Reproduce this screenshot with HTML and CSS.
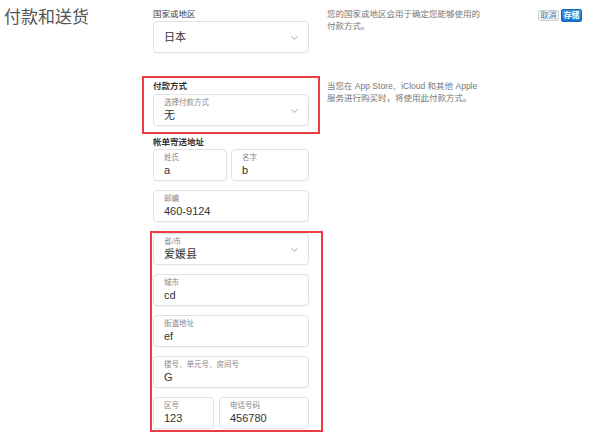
FILE: index.html
```html
<!DOCTYPE html>
<html lang="zh-CN">
<head>
    <meta charset="UTF-8">
    <meta name="viewport" content="width=device-width, initial-scale=1.0">
    <title>付款和送货</title>
    <link rel="stylesheet" href="styles.css">
</head>
<body>
<div class="page">
    <h1 class="title">付款和送货</h1>

    <div class="main">
        <section class="section">
            <div class="col">
                <div class="group-label">国家或地区</div>
                <div class="field select">
                    <span class="value">日本</span>
                    <svg class="chev" width="7" height="4" viewBox="0 0 7 4"><path d="M0.5 0.5 L3.5 3.3 L6.5 0.5" fill="none" stroke="#9a9a9a" stroke-width="0.9"/></svg>
                </div>
            </div>
            <p class="desc">您的国家或地区会用于确定您能够使用的<br>付款方式。</p>
        </section>

        <section class="section">
            <div class="col">
                <div class="mark mark-pay">
                    <div class="group-label strong">付款方式</div>
                    <div class="field select">
                        <div class="stack">
                            <span class="small">选择付款方式</span>
                            <span class="value">无</span>
                        </div>
                        <svg class="chev" width="7" height="4" viewBox="0 0 7 4"><path d="M0.5 0.5 L3.5 3.3 L6.5 0.5" fill="none" stroke="#9a9a9a" stroke-width="0.9"/></svg>
                    </div>
                </div>
            </div>
            <p class="desc desc-pay">当您在 App Store、iCloud 和其他 Apple<br>服务进行购买时，将使用此付款方式。</p>
        </section>

        <section class="section">
            <div class="col">
                <div class="group-label strong billing">帐单寄送地址</div>
                <div class="fields">
                    <div class="row row-name">
                        <div class="field"><div class="stack"><span class="small">姓氏</span><span class="value">a</span></div></div>
                        <div class="field"><div class="stack"><span class="small">名字</span><span class="value">b</span></div></div>
                    </div>
                    <div class="field"><div class="stack"><span class="small">邮编</span><span class="value">460-9124</span></div></div>
                </div>

                <div class="mark mark-addr">
                    <div class="fields">
                        <div class="field select">
                            <div class="stack"><span class="small">省/市</span><span class="value">爱媛县</span></div>
                            <svg class="chev" width="7" height="4" viewBox="0 0 7 4"><path d="M0.5 0.5 L3.5 3.3 L6.5 0.5" fill="none" stroke="#9a9a9a" stroke-width="0.9"/></svg>
                        </div>
                        <div class="field"><div class="stack"><span class="small">城市</span><span class="value">cd</span></div></div>
                        <div class="field"><div class="stack"><span class="small">街道地址</span><span class="value">ef</span></div></div>
                        <div class="field"><div class="stack"><span class="small">楼号、单元号、房间号</span><span class="value">G</span></div></div>
                        <div class="row row-phone">
                            <div class="field"><div class="stack"><span class="small">区号</span><span class="value">123</span></div></div>
                            <div class="field"><div class="stack"><span class="small">电话号码</span><span class="value">456780</span></div></div>
                        </div>
                    </div>
                </div>
            </div>
        </section>
    </div>

    <div class="actions">
        <button class="btn btn-cancel">取消</button>
        <button class="btn btn-save">存储</button>
    </div>
</div>
</body>
</html>
```

FILE: styles.css
```css
body { margin: 0; font-family: "Liberation Sans", "Noto Sans CJK SC", sans-serif; color: #333; background: #fff; }
.page { display: flex; align-items: flex-start; }
.title { width: 149px; margin: 0; padding: 8px 0 0 4px; font-size: 17px; line-height: 20px; font-weight: 400; color: #555; }

.main { flex: 1; padding-top: 8px; }
.section { display: grid; grid-template-columns: 156px 1fr; column-gap: 18px; align-items: start; }
.section + .section { margin-top: 23px; }
.section:last-child { margin-top: 2px; }

.group-label { font-size: 8.5px; line-height: 12px; color: #444; margin-bottom: 1px; }
.group-label.strong { color: #333; font-weight: 700; }
.mark-pay .group-label { margin-bottom: 2px; }

.desc { margin: 0; font-size: 8.5px; line-height: 12px; color: #777; white-space: nowrap; }
.desc-pay { margin-top: 4px; }

.field { height: 32px; box-sizing: border-box; border: 1px solid #e2e2e2; border-radius: 4px; padding: 3px 10px; display: flex; align-items: center; justify-content: space-between; background: #fff; box-shadow: 0 1px 1px rgba(0,0,0,0.03); }
.stack { display: flex; flex-direction: column; }
.small { font-size: 7.5px; line-height: 10px; color: #888; }
.value { font-size: 11px; line-height: 14px; color: #333; }
.chev { flex: none; margin-top: 1px; }

.fields { display: flex; flex-direction: column; gap: 9px; }
.row { display: flex; gap: 4px; }
.row .field { flex: 1; }
.row-name .field:first-child { flex: 0 0 74px; }
.row-phone { gap: 5px; }
.row-phone .field:first-child { flex: 0 0 61px; }

/* red annotation frames around the edited parts */
.mark { border: 2px solid #ec3b42; }
.mark-pay { margin: 0 -11px; padding: 2px 9px 6px; }
.mark-addr { margin: 9px -14px 0 -3px; padding: 0 12px 1px 1px; }

.actions { display: flex; gap: 2px; padding-top: 9px; margin-right: 18px; }
.btn { width: 21px; height: 12px; box-sizing: border-box; font-family: inherit; font-size: 8px; line-height: 10px; padding: 0; border-radius: 2px; cursor: pointer; }
.btn-cancel { margin-top: 1px; height: 11px; background: #f3f3f3; border: 1px solid #cfcfcf; color: #4c77ad; }
.btn-save { height: 13px; background: linear-gradient(#3b8fe0, #1a73cf); border: 1px solid #1667bd; color: #fff; font-weight: 700; }
```
